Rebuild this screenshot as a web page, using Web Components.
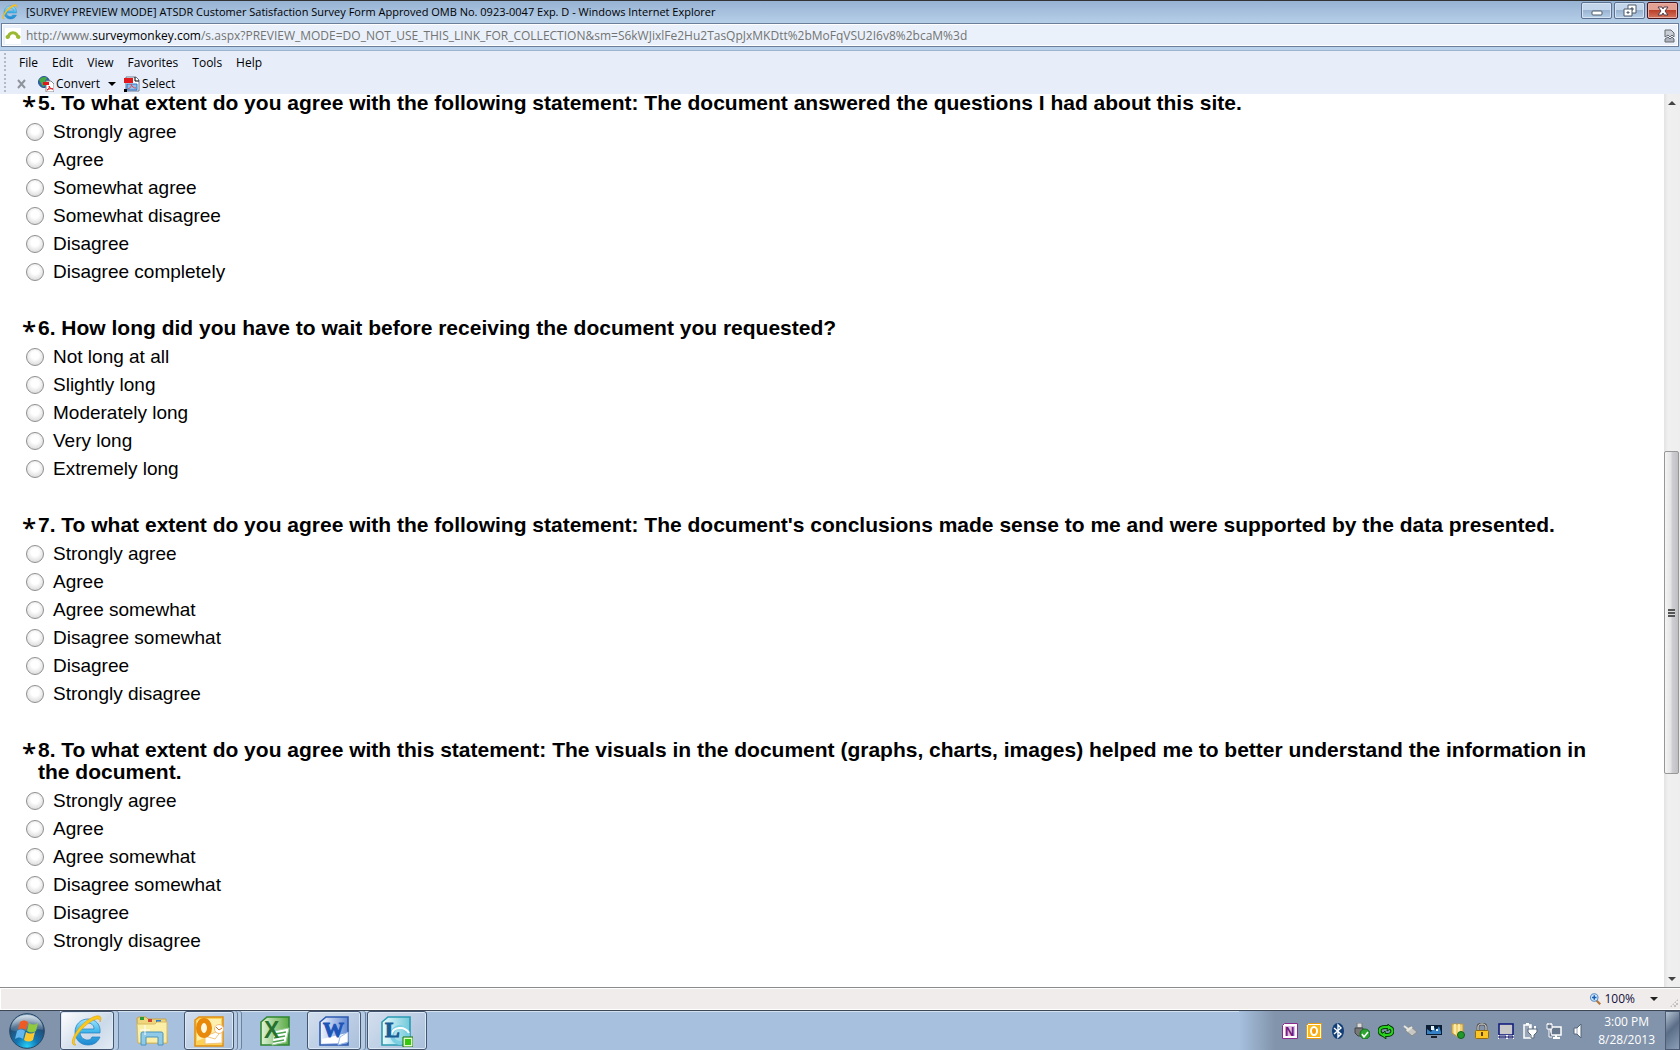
<!DOCTYPE html>
<html lang="en">
<head>
<meta charset="utf-8">
<title>ATSDR Customer Satisfaction Survey</title>
<style>
  html, body {
    height: 100%;
    margin: 0;
  }

  body {
    background: #fff;
    color: #000;
    font: 12px/16px "Open Sans", "Noto Sans", sans-serif;
    overflow: hidden;
  }
</style>
</head>
<body>
<browser-window>
  <title-bar slot="title">[SURVEY PREVIEW MODE] ATSDR Customer Satisfaction Survey Form Approved OMB No. 0923-0047 Exp. D - Windows Internet Explorer</title-bar>
  <address-bar slot="address">http://www.<b>surveymonkey.com</b>/s.aspx?PREVIEW_MODE=DO_NOT_USE_THIS_LINK_FOR_COLLECTION&amp;sm=S6kWJixlFe2Hu2TasQpJxMKDtt%2bMoFqVSU2I6v8%2bcaM%3d</address-bar>
  <menu-bar slot="menu" items="File|Edit|View|Favorites|Tools|Help"></menu-bar>

  <survey-question name="q5" options="Strongly agree|Agree|Somewhat agree|Somewhat disagree|Disagree|Disagree completely">5. To what extent do you agree with the following statement: The document answered the questions I had about this site.</survey-question>
  <survey-question name="q6" options="Not long at all|Slightly long|Moderately long|Very long|Extremely long">6. How long did you have to wait before receiving the document you requested?</survey-question>
  <survey-question name="q7" options="Strongly agree|Agree|Agree somewhat|Disagree somewhat|Disagree|Strongly disagree">7. To what extent do you agree with the following statement: The document's conclusions made sense to me and were supported by the data presented.</survey-question>
  <survey-question name="q8" options="Strongly agree|Agree|Agree somewhat|Disagree somewhat|Disagree|Strongly disagree">8. To what extent do you agree with this statement: The visuals in the document (graphs, charts, images) helped me to better understand the information in the document.</survey-question>

  <scroll-bar slot="scroll"></scroll-bar>
  <status-bar slot="status">100%</status-bar>
  <task-bar slot="taskbar" time="3:00 PM" date="8/28/2013"></task-bar>
</browser-window>

<script>
// name: [viewBox size, svg markup]
const icons = {
  ie: [32, `
    <defs><linearGradient id="b" x2="0" y2="1"><stop stop-color="#9fe4fb"/><stop offset=".5" stop-color="#3db5ea"/><stop offset="1" stop-color="#1d86cf"/></linearGradient></defs>
    <path d="M9 18h20c1-8-4-14-12-14C9 4 4 10 4 17s5 13 13 13c6 0 10-3 12-8h-8c-1 2-2 3-4 3-4 0-7-2-8-7zm1-4c1-4 4-6 7-6s6 2 6 6z" fill="url(#b)" stroke="#1d7dbd" stroke-width=".7"/>
    <path d="M5 30C1 31 0 27 3 21 7 12 17 3 25 1c5-1 6 2 4 6 0-3-2-4-6-2C16 8 7 17 4 24c-1 3-1 5 1 6z" fill="#fbc81c" stroke="#d99a10" stroke-width=".5"/>`],
  monkey: [16, `
    <path fill="#fff" d="M0 0h16v16H0z"/>
    <path d="M3 10C4 3 12 3 13 10" fill="none" stroke="#9bb832" stroke-width="3"/>
    <circle cx="2.500" cy="9" r="2" fill="#9bb832"/><circle cx="13.500" cy="9" r="2" fill="#9bb832"/>`],
  broken: [16, `
    <path d="M5 2h6l3 3v4l-2-2-2 2-2-2-3 2z" fill="#c9ced4" stroke="#666b73"/>
    <path d="M5 14v-3l3-2 2 2 2-2 2 2v3z" fill="#aeb4bc" stroke="#666b73"/>`],
  minimize: [16, `<rect x="3" y="8" width="10" height="4" rx="1" fill="#fff" stroke="#4e5a6b"/>`],
  restore: [16, `
    <path d="M6 2h8v8H6z" fill="#fff" stroke="#4e5a6b"/><path d="M9 5h2v2H9z" fill="#8ea8c7" stroke="#4e5a6b"/>
    <path d="M2 6h8v7H2z" fill="#fff" stroke="#4e5a6b"/><path d="M5 9h2v1H5z" fill="#8ea8c7" stroke="#4e5a6b"/>`],
  close: [16, `<path d="M3 4h4l1 2 1-2h4l-3 4 3 4H9l-1-2-1 2H3l3-4z" fill="#fff" stroke="#553b45"/>`],
  cross: [16, `<path d="M4 4l7 8M11 4l-7 8" stroke="#8f949b" stroke-width="2"/>`],
  convert: [16, `
    <circle cx="6" cy="6" r="5.500" fill="#3465b0" stroke="#27518f"/>
    <path d="M1 4c2-3 6-4 8-2L7 5l2 2-4 4-2-4z" fill="#43a940"/>
    <path d="M8 5h5l3 3v8H8z" fill="#fff" stroke="#888"/><path d="M5 6h6v3H5z" fill="#e1181c"/>
    <path d="M9 14c2-1 3-3 2-4 1 2 2 3 4 3-2-1-4 0-6 1z" fill="none" stroke="#e1181c"/>`],
  select: [16, `
    <path d="M2 1h10l3 3v11H2z" fill="#fff" stroke="#6b7a90"/>
    <path d="M0 2h9v5H0z" fill="#e1181c"/><path d="M3 8h10v6H3z" fill="#8ec1f1" stroke="#3171bf"/>
    <path d="M4 13c3-1 4-4 3-5 1 3 3 4 5 4" fill="none" stroke="#e34b46"/><path d="M0 13h3v3H0z"/>
    <path d="M11 1v4h4" fill="none" stroke="#000"/>`],
  magnify: [16, `
    <path d="M10 10l5 5" stroke="#b3793e" stroke-width="3"/>
    <circle cx="7" cy="6" r="5" fill="#d6eaff" stroke="#568bc5" stroke-width="1.500"/>
    <path d="M7 3v6M4 6h6" stroke="#1760b7" stroke-width="2"/>`],
  start: [36, `
    <defs>
      <radialGradient id="o" cx=".5" cy=".95" r=".9"><stop stop-color="#27d0f8"/><stop offset=".35" stop-color="#1277b4"/><stop offset=".75" stop-color="#244b72"/><stop offset="1" stop-color="#83a5bf"/></radialGradient>
      <linearGradient id="g" x2="0" y2="1"><stop stop-color="#fff" stop-opacity=".65"/><stop offset="1" stop-color="#fff" stop-opacity=".1"/></linearGradient>
    </defs>
    <circle cx="18" cy="18" r="17.300" fill="url(#o)" stroke="#274766"/>
    <path d="M2 17C2 8 9 2 18 2s16 6 16 15c-8-3-21 5-32 0z" fill="url(#g)"/>
    <path d="M11 9c3-2 5-2 8 0l-2 8c-3-2-5-2-8 0z" fill="#ee5a24"/>
    <path d="M20 10c3 2 6 2 9 0l-2 8c-3 2-6 2-9 0z" fill="#90c83e"/>
    <path d="M8 18c3-2 5-2 8 0l-2 8c-3-2-5-2-8 0z" fill="#63b6ee"/>
    <path d="M17 19c3 2 6 2 9 0l-2 8c-3 2-6 2-9 0z" fill="#fcc82e"/>`],
  folder: [32, `
    <path d="M1 3l2-1h7l2 2h18l1 24H2z" fill="#efd67c" stroke="#c6a248"/>
    <path d="M4 2h4v3H4z" fill="#2b9b37"/><path d="M12 4h4v3h-4z" fill="#d04530"/><path d="M20 5h5v3h-5z" fill="#2d7fd0"/>
    <path d="M1 9h18l2-2h10v21H2z" fill="#fbeea6" stroke="#d8bb62"/>
    <path d="M5 30V19c0-2 1-2 2-2h18c2 0 2 1 2 2v11h-5v-8H10v8z" fill="#8fcbe8" stroke="#4c93bd"/>
    <path d="M9 10v10M4 15h10" stroke="#fff" stroke-width="1"/>`],
  outlook: [32, `
    <path d="M2 5l4-3h24v29H2z" fill="#fdd057" stroke="#e08f12" stroke-width="1.500"/>
    <path d="M4 6l4-2h20v12L4 26z" fill="#fff0b0"/>
    <path d="M12 21l17-6v13l-17 1z" fill="#fff" stroke="#f0c57c"/><path d="M12 21l10 3 7-9" fill="none" stroke="#f0c57c"/>
    <ellipse cx="11" cy="13" rx="5.500" ry="7.500" fill="#fff8dc" stroke="#e8890c" stroke-width="5"/>
    <circle cx="26" cy="14" r="4.500" fill="#fff" stroke="#f5bc75"/><path d="M23 12l3 3 3-2" fill="none" stroke="#d0762a"/>`],
  excel: [32, `
    <defs><linearGradient id="x"><stop stop-color="#dff3d6"/><stop offset="1" stop-color="#5aa945"/></linearGradient></defs>
    <path d="M2 7l6-5h22v28H2z" fill="url(#x)" stroke="#2e8631" stroke-width="1.600"/>
    <path d="M15 16l15-3-3 14-14 3z" fill="#fff" stroke="#9fcf98"/>
    <path d="M16 19l11-2M15 23l11-2M14 27l11-2" stroke="#4ca14e" stroke-width="1.500"/>
    <text x="5" y="23" font-family="Liberation Sans" font-weight="700" font-size="23" fill="#26712e">X</text>`],
  word: [32, `
    <defs><linearGradient id="w"><stop stop-color="#f1f6ff"/><stop offset="1" stop-color="#6389d2"/></linearGradient></defs>
    <path d="M2 7l6-5h22v28H2z" fill="url(#w)" stroke="#2c5ab0" stroke-width="1.600"/>
    <path d="M4 24l25-6v10H4z" fill="#fff"/><path d="M22 22l8-5v10l-10 3z" fill="#fff" stroke="#9bb8e7"/>
    <text x="5" y="22" font-family="Liberation Serif" font-weight="700" font-size="21" fill="#1c55b8" stroke="#1c55b8">W</text>`],
  lync: [32, `
    <defs><linearGradient id="l"><stop stop-color="#e7fafd"/><stop offset="1" stop-color="#72c8d9"/></linearGradient></defs>
    <path d="M1 7l6-5h22v28H1z" fill="url(#l)" stroke="#2a9ab3" stroke-width="1.600"/>
    <circle cx="19" cy="20" r="8" fill="none" stroke="#7bcfe3" stroke-width="4"/><path d="M10 20c2-9 14-9 18-2" fill="none" stroke="#fff" stroke-width="2"/>
    <text x="4" y="22" font-family="Liberation Serif" font-weight="700" font-size="22" fill="#1b5c94" stroke="#1b5c94">L</text>
    <path d="M22 22h10v10H22z" fill="#dfffc8" stroke="#17700d"/><path d="M24 24h6v6h-6z" fill="#35c80e"/>`],
  onenote: [16, `
    <path d="M.5 2.500l2-2h13v15H.5z" fill="#fff" stroke="#8b2a8d"/><path d="M3 3h10v10H3z" fill="#e0bfe1"/>
    <text x="3" y="13" font-family="Liberation Sans" font-weight="700" font-size="13" fill="#73157a">N</text>`],
  outlookTray: [16, `
    <path d="M.5 2.500l2-2h13v15H.5z" fill="#fff" stroke="#e69a0c"/><path d="M2 2h12v12H2z" fill="#fbb81c"/>
    <ellipse cx="8" cy="8" rx="3" ry="4" fill="#f59c10" stroke="#fff" stroke-width="2"/>`],
  bluetooth: [16, `<ellipse cx="8" cy="8" rx="6" ry="8" fill="#123f77"/><path d="M4 5l7 6-3 3V2l3 3-7 6" fill="none" stroke="#fff" stroke-width="1.400"/>`],
  usb: [16, `
    <path d="M3 0h5v5H3z" fill="#ddd" stroke="#777"/><path d="M1 5h8v5l-2 3H4l-3-3z" fill="#777" stroke="#444"/>
    <circle cx="11" cy="11" r="5" fill="#2da531" stroke="#177120"/><path d="M8 11l2 3 4-5" fill="none" stroke="#fff" stroke-width="1.600"/>`],
  sync: [16, `
    <path d="M6 12C0 11 0 4 7 4h4M10 4c6 1 6 8-1 8H6" fill="none" stroke="#063d08" stroke-width="4"/>
    <path d="M10 1l4 4-5 3zM7 8l-4 4 5 4z" fill="#29d41c" stroke="#063d08"/>
    <path d="M6 12C0 11 0 4 7 4h4M10 4c6 1 6 8-1 8H6" fill="none" stroke="#29d41c" stroke-width="2"/>`],
  device: [16, `<path d="M3 7l5-4 7 6-5 4z" fill="#c7c7c3" stroke="#8b8b88"/><path d="M2 3l4 3M5 8l5-4" stroke="#e6e6e0" stroke-width="2"/>`],
  monitor: [16, `
    <path d="M0 2h16v10H0z" fill="#0a1e36"/><path d="M1 6l4 3 3-5 2 4 3-5 2 6v2H1z" fill="#3681c6"/>
    <path d="M5 3h3v4H5zM10 6h2v2h-2z" fill="#e5f5ff"/><path d="M5 13h6v2H5z" fill="#17202c"/>`],
  shield: [16, `
    <path d="M2 1h11v9l-4 5-7-5z" fill="#f2cf70" stroke="#bb9647"/><path d="M5 1v10M9 1v12" stroke="#fff3bd" stroke-width="1.500"/>
    <circle cx="11" cy="12" r="3.500" fill="#23982a" stroke="#136018"/>`],
  lock: [16, `
    <path d="M4 8V4c0-4 8-4 8 0v4" fill="none" stroke="#5e5e5e" stroke-width="3"/><path d="M4 8V4c0-4 8-4 8 0v4" fill="none" stroke="#ddd"/>
    <rect x="1.500" y="7.500" width="13" height="8" rx="1" fill="#fbc526" stroke="#966c09"/><path d="M8 9v4" stroke="#5d4305" stroke-width="2"/>`],
  laptop: [16, `
    <path d="M1 1h14v11H1z" fill="#c8c8c8" stroke="#0c1679" stroke-width="1.500"/>
    <path d="M0 12h16v4H0z" fill="#fff"/><path d="M1 13h7v2H1zM10 13h5v2h-5z" fill="#aaa" stroke="#0c1679"/>`],
  power: [16, `
    <path d="M2 2h7v13H2z" fill="#99a6b8" stroke="#fff" stroke-width="1.500"/><path d="M4 0h3v2H4z" fill="#fff"/>
    <path d="M8 3v3M13 3v3" stroke="#fff" stroke-width="2"/><path d="M6 6h9v3l-3 3v3H9v-3L6 9z" fill="#fff" stroke="#58667a"/>`],
  network: [16, `
    <path d="M5 4h10v8H5z" fill="#67778c" stroke="#fff" stroke-width="1.500"/><path d="M7 15h7M10 12v3" stroke="#fff" stroke-width="2"/>
    <path d="M1 1h5v5H1zM3 6v8h3M2 0v2M5 0v2" fill="#67778c" stroke="#fff"/>`],
  speaker: [16, `<path d="M4 5h3l4-4v14l-4-4H4z" fill="#fff" stroke="#55647a"/><path d="M7 5v6" stroke="#9aa7b8"/>`],
};

class WinIcon extends HTMLElement {
  constructor() {
    super();
    this.attachShadow({ mode: 'open' });
  }

  connectedCallback() {
    const [box, markup] = icons[this.getAttribute('name')];
    const size = this.getAttribute('size') || 16;

    this.shadowRoot.innerHTML = `
      <style>
        :host {
          display: block;
          flex: none;
        }

        svg {
          display: block;
        }
      </style>
      <svg width="${size}" height="${size}" viewBox="0 0 ${box} ${box}" aria-hidden="true">${markup}</svg>
    `;
  }
}

customElements.define('win-icon', WinIcon);

class BrowserWindow extends HTMLElement {
  constructor() {
    super();
    this.attachShadow({ mode: 'open' });
    this.shadowRoot.innerHTML = `
      <style>
        :host {
          display: flex;
          flex-direction: column;
          height: 100vh;
        }

        .chrome {
          background: linear-gradient(#97b3d3, #b9d1ea 24px);
          border-top: 1px solid #333;
          border-bottom: 1px solid #9db4cf;
          padding-bottom: 3px;
        }

        .view {
          flex: 1;
          min-height: 0;
          display: flex;
        }

        main {
          flex: 1;
          min-width: 0;
          overflow: hidden;
        }

        /* the page is scrolled part of the way down */
        form {
          display: flex;
          flex-direction: column;
          gap: 31px;
          margin-top: -2px;
          padding: 0 56px 0 22px;
        }
      </style>
      <header class="chrome">
        <slot name="title"></slot>
        <slot name="address"></slot>
      </header>
      <slot name="menu"></slot>
      <div class="view">
        <main><form><slot></slot></form></main>
        <slot name="scroll"></slot>
      </div>
      <slot name="status"></slot>
      <slot name="taskbar"></slot>
    `;
  }
}

customElements.define('browser-window', BrowserWindow);

class TitleBar extends HTMLElement {
  constructor() {
    super();
    this.attachShadow({ mode: 'open' });
    this.shadowRoot.innerHTML = `
      <style>
        :host {
          display: flex;
          align-items: center;
          gap: 8px;
          height: 22px;
          padding: 0 2px;
        }

        span {
          flex: 1;
          font-size: 11px;
          white-space: nowrap;
          overflow: hidden;
        }

        .controls {
          display: flex;
          align-self: flex-start;
          gap: 2px;
          padding-top: 1px;
        }

        button {
          display: grid;
          place-items: center;
          box-sizing: border-box;
          width: 31px;
          height: 17px;
          padding: 0;
          border: 1px solid #5c7192;
          border-radius: 2px;
          background: linear-gradient(#c3d5ea 45%, #97b1cf 45%, #b7cfe8);
          box-shadow: inset 0 0 0 1px #d5e3f2;
        }

        .close {
          border-color: #47141c;
          background: linear-gradient(#e2a193 45%, #b93c26 45%, #d4745c);
          box-shadow: inset 0 0 0 1px #e5afa5;
        }
      </style>
      <win-icon name="ie"></win-icon>
      <span><slot></slot></span>
      <div class="controls">
        <button type="button" aria-label="Minimize"><win-icon name="minimize"></win-icon></button>
        <button type="button" aria-label="Restore"><win-icon name="restore"></win-icon></button>
        <button type="button" class="close" aria-label="Close"><win-icon name="close"></win-icon></button>
      </div>
    `;
  }
}

customElements.define('title-bar', TitleBar);

class AddressBar extends HTMLElement {
  constructor() {
    super();
    this.attachShadow({ mode: 'open' });
    this.shadowRoot.innerHTML = `
      <style>
        :host {
          display: flex;
          align-items: center;
          gap: 5px;
          height: 20px;
          margin: 0 1px;
          padding: 2px 2px 0 3px;
          border: 1px solid #6b7f9b;
          background: #eaf1fa;
          box-shadow: inset 0 0 0 1px #fff;
          color: #737373;
        }

        .url {
          flex: 1;
          white-space: nowrap;
          overflow: hidden;
          outline: none;
        }

        ::slotted(b) {
          color: #000;
          font-weight: 400;
        }
      </style>
      <win-icon name="monkey"></win-icon>
      <div class="url" role="textbox" aria-label="Address" tabindex="0"><slot></slot></div>
      <win-icon name="broken"></win-icon>
    `;
  }
}

customElements.define('address-bar', AddressBar);

class MenuBar extends HTMLElement {
  constructor() {
    super();
    this.attachShadow({ mode: 'open' });
  }

  connectedCallback() {
    const itemsHTML = this.getAttribute('items')
      .split('|')
      .map(item => `<button type="button">${item}</button>`)
      .join('');

    this.shadowRoot.innerHTML = `
      <style>
        :host {
          display: block;
          padding-top: 1px;
          background: #e7eefa;
        }

        .row {
          display: flex;
          align-items: center;
          height: 21px;
          padding-left: 4px;
        }

        .row::before {
          content: '';
          width: 2px;
          height: 20px;
          margin-right: 6px;
          background: repeating-linear-gradient(#b4bac4 0 2px, transparent 2px 4px);
        }

        button {
          display: flex;
          align-items: center;
          gap: 2px;
          padding: 0 7px;
          border: 0;
          background: none;
          color: inherit;
          font: inherit;
        }

        .row + .row button {
          padding: 0 4px;
        }

        .row + .row::before {
          margin-right: 4px;
        }

        .arrow {
          border: 4px solid transparent;
          border-top-color: #000;
          border-bottom: 0;
        }
      </style>
      <nav class="row" aria-label="Menu">${itemsHTML}</nav>
      <div class="row">
        <button type="button" aria-label="Close toolbar"><win-icon name="cross"></win-icon></button>
        <button type="button"><win-icon name="convert"></win-icon>Convert</button>
        <button type="button" aria-label="Convert options"><i class="arrow"></i></button>
        <button type="button"><win-icon name="select"></win-icon>Select</button>
      </div>
    `;
  }
}

customElements.define('menu-bar', MenuBar);

class SurveyQuestion extends HTMLElement {
  constructor() {
    super();
    this.attachShadow({ mode: 'open' });
  }

  connectedCallback() {
    const name = this.getAttribute('name');
    const optionsHTML = this.getAttribute('options')
      .split('|')
      .map(option => `<label><input type="radio" name="${name}">${option}</label>`)
      .join('');

    this.shadowRoot.innerHTML = `
      <style>
        :host {
          display: block;
          font-family: "Liberation Sans", Arial, sans-serif;
        }

        fieldset {
          min-width: 0;
          margin: 0;
          padding: 0;
          border: 0;
        }

        legend {
          display: flex;
          padding: 0 0 4px;
          font-size: 21px;
          font-weight: 700;
          line-height: 22px;
        }

        .required {
          flex: none;
          width: 16px;
          height: 22px;
          font: 600 26px/26px "Open Sans", sans-serif;
        }

        label {
          display: flex;
          align-items: center;
          gap: 9px;
          width: fit-content;
          height: 28px;
          padding-left: 4px;
          font-size: 19px;
        }

        input {
          appearance: none;
          box-sizing: border-box;
          width: 18px;
          height: 18px;
          margin: 0;
          border: 1px solid #8e8f8f;
          border-radius: 50%;
          background: radial-gradient(circle at 50% 40%, #fff 30%, #ccc);
        }

        input:checked {
          background: radial-gradient(#1a5f8e 35%, #fff 40%);
        }
      </style>
      <fieldset>
        <legend><span class="required">*</span><span><slot></slot></span></legend>
        ${optionsHTML}
      </fieldset>
    `;
  }
}

customElements.define('survey-question', SurveyQuestion);

class ScrollBar extends HTMLElement {
  constructor() {
    super();
    this.attachShadow({ mode: 'open' });
    this.shadowRoot.innerHTML = `
      <style>
        :host {
          display: flex;
          flex-direction: column;
          width: 16px;
          background: linear-gradient(90deg, #e3e3e3, #f0f0f0 4px, #eee);
        }

        button {
          display: grid;
          place-items: center;
          height: 17px;
          padding: 0;
          border: 0;
          background: none;
        }

        .up,
        .down {
          border: 4px solid transparent;
        }

        .up {
          border-top: 0;
          border-bottom-color: #444;
        }

        .down {
          border-bottom: 0;
          border-top-color: #444;
        }

        .before {
          flex: 341;
        }

        .after {
          flex: 196;
        }

        .thumb {
          flex: 322;
          display: grid;
          place-items: center;
          box-sizing: border-box;
          margin-right: 1px;
          border: 1px solid #979797;
          border-radius: 2px;
          background: linear-gradient(90deg, #f5f5f5, #e4e4e6 45%, #cfcfd3 55%, #bfbfc4);
        }

        .grip {
          width: 7px;
          height: 8px;
          background: repeating-linear-gradient(#555 0 2px, #ddd 2px 3px);
        }
      </style>
      <button type="button" aria-label="Scroll up"><i class="up"></i></button>
      <div class="before"></div>
      <div class="thumb"><div class="grip"></div></div>
      <div class="after"></div>
      <button type="button" aria-label="Scroll down"><i class="down"></i></button>
    `;
  }
}

customElements.define('scroll-bar', ScrollBar);

class StatusBar extends HTMLElement {
  constructor() {
    super();
    this.attachShadow({ mode: 'open' });
    this.shadowRoot.innerHTML = `
      <style>
        :host {
          display: flex;
          align-items: center;
          justify-content: flex-end;
          box-sizing: border-box;
          height: 23px;
          padding-right: 2px;
          border-top: 1px solid #8c8c8c;
          background: #f0eceb;
          box-shadow: inset 0 1px #fff, inset 1px 0 #fff, inset 0 -1px #fff;
        }

        button {
          display: flex;
          align-items: center;
          gap: 3px;
          padding: 0;
          border: 0;
          background: none;
          color: #10103c;
          font: inherit;
        }

        .arrow {
          margin: 0 12px;
          border: 4px solid transparent;
          border-top-color: #222;
          border-bottom: 0;
        }

        .resize {
          align-self: flex-end;
          width: 8px;
          height: 8px;
          margin-bottom: 3px;
          background: repeating-conic-gradient(#c2bfbe 0 25%, transparent 0 50%) 0 0 / 4px 4px;
          clip-path: polygon(100% 0, 100% 100%, 0 100%);
        }
      </style>
      <button type="button">
        <win-icon name="magnify" size="12"></win-icon>
        <slot></slot>
        <i class="arrow"></i>
      </button>
      <div class="resize"></div>
    `;
  }
}

customElements.define('status-bar', StatusBar);

class TaskBar extends HTMLElement {
  constructor() {
    super();
    this.attachShadow({ mode: 'open' });
  }

  connectedCallback() {
    const apps = [
      { icon: 'ie', label: 'Internet Explorer', state: 'open active stacked' },
      { icon: 'folder', label: 'Windows Explorer', state: '' },
      { icon: 'outlook', label: 'Outlook', state: 'open stacked many' },
      { icon: 'excel', label: 'Excel', state: '' },
      { icon: 'word', label: 'Word', state: 'open stacked' },
      { icon: 'lync', label: 'Lync', state: 'open' }
    ];
    const tray = ['onenote', 'outlookTray', 'bluetooth', 'usb', 'sync', 'device', 'monitor',
      'shield', 'lock', 'laptop', 'power', 'network', 'speaker'];

    const appsHTML = apps
      .map(app => `<button type="button" class="app ${app.state}" aria-label="${app.label}"><win-icon name="${app.icon}" size="32"></win-icon></button>`)
      .join('');
    const trayHTML = tray.map(name => `<win-icon name="${name}"></win-icon>`).join('');

    this.shadowRoot.innerHTML = `
      <style>
        :host {
          display: flex;
          box-sizing: border-box;
          height: 40px;
          border-top: 1px solid #3d4655;
          background: #a6c0de;
          box-shadow: inset 0 1px #d3e0ee;
        }

        button {
          display: grid;
          place-items: center;
          box-sizing: border-box;
          padding: 0;
          border: 0;
          background: none;
        }

        .start {
          width: 60px;
          padding-right: 6px;
          background: #8294ab;
        }

        .apps {
          flex: 1;
          display: flex;
        }

        .app {
          width: 64px;
        }

        .open {
          width: 60px;
          border: 1px solid #43556f;
          border-radius: 3px;
          background: linear-gradient(135deg, #d3dfee, #a9bfdb);
          box-shadow: inset 0 0 0 1px #dce8f5;
        }

        .stacked {
          width: 54px;
          margin-right: 6px;
          box-shadow: inset 0 0 0 1px #dce8f5, 4px 0 #b4c9e2, 5px 0 #6d82a0;
        }

        .many {
          width: 50px;
          margin-right: 9px;
          box-shadow: inset 0 0 0 1px #dce8f5, 3px 0 #b4c9e2, 4px 0 #6d82a0, 7px 0 #b4c9e2, 8px 0 #6d82a0;
        }

        .active {
          background: linear-gradient(135deg, #fff, #cbd9e9 60%, #e3ebf4);
        }

        .tray {
          display: flex;
          align-items: center;
          gap: 8px;
          padding: 1px 10px 0 43px;
          background: linear-gradient(90deg, #a6c0de, #8294ab 36px);
        }

        .clock {
          padding-left: 4px;
          color: #fff;
          line-height: 18px;
          text-align: center;
        }

        .desktop {
          width: 15px;
          border: 1px solid #4d5c72;
          background: linear-gradient(135deg, #b5c3d3, #5b6e88 45%, #8da0b8);
        }
      </style>
      <button type="button" class="start" aria-label="Start"><win-icon name="start" size="36"></win-icon></button>
      <div class="apps">${appsHTML}</div>
      <div class="tray">
        ${trayHTML}
        <div class="clock">
          <div>${this.getAttribute('time')}</div>
          <div>${this.getAttribute('date')}</div>
        </div>
      </div>
      <button type="button" class="desktop" aria-label="Show desktop"></button>
    `;
  }
}

customElements.define('task-bar', TaskBar);
</script>
</body>
</html>
